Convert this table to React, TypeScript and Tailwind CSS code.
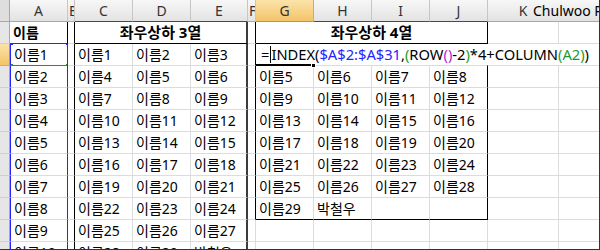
import React from "react";

const COLS = ["A", "B", "C", "D", "E", "F", "G", "H", "I", "J", "K", "L"];

const nm = (n: number) => (n === 30 ? "박철우" : n > 30 ? "" : `이름${n}`);

type Spec = {
  key: string;
  text?: string;
  bold?: boolean;
  center?: boolean;
  r: string;
  b: string;
  l?: string;
  span?: string;
  formula?: boolean;
  sel?: boolean;
};

const GR = "border-r-[#dadcdd]";
const GB = "border-b-[#dadcdd]";
const BR = "border-r-black";
const BB = "border-b-black";
const BLUE_R = "border-r-[#2424ff]";
const BLUE_B = "border-b-[#2424ff]";
const BLUE_L = "border-l border-l-[#2424ff]";
const GREEN_B = "border-b-[#1f9a1f]";
const E_R = "border-r-2 border-r-[#3c3c3c]";

function buildRow(row: number): Spec[] {
  const cells: Spec[] = [];
  if (row === 1) {
    cells.push({ key: "A", text: "이름", bold: true, r: BR, b: BLUE_B });
  } else {
    cells.push({
      key: "A",
      text: nm(row - 1),
      r: BLUE_R,
      b: row === 2 ? GREEN_B : GB,
      l: BLUE_L,
      sel: row === 2,
    });
  }
  cells.push({ key: "B", r: BR, b: GB });
  if (row === 1) {
    cells.push({ key: "CE", text: "좌우상하 3열", bold: true, center: true, r: E_R, b: BB, span: "col-span-3" });
  } else {
    const base = (row - 2) * 3;
    cells.push({ key: "C", text: nm(base + 1), r: GR, b: GB });
    cells.push({ key: "D", text: nm(base + 2), r: GR, b: GB });
    cells.push({ key: "E", text: nm(base + 3), r: E_R, b: GB });
  }
  cells.push({ key: "F", r: row <= 9 ? BR : GR, b: GB });
  if (row === 1) {
    cells.push({ key: "GJ", text: "좌우상하 4열", bold: true, center: true, r: BR, b: BB, span: "col-span-4" });
  } else if (row === 2) {
    cells.push({ key: "G", formula: true, r: GR, b: GB });
    cells.push({ key: "H", r: GR, b: GB });
    cells.push({ key: "I", r: GR, b: GB });
    cells.push({ key: "J", r: BR, b: GB });
  } else if (row <= 9) {
    const base = (row - 2) * 4;
    const bb = row === 9 ? BB : GB;
    cells.push({ key: "G", text: nm(base + 1), r: GR, b: bb });
    cells.push({ key: "H", text: nm(base + 2), r: GR, b: bb });
    cells.push({ key: "I", text: nm(base + 3), r: GR, b: bb });
    cells.push({ key: "J", text: nm(base + 4), r: BR, b: bb });
  } else {
    cells.push({ key: "G", r: GR, b: GB });
    cells.push({ key: "H", r: GR, b: GB });
    cells.push({ key: "I", r: GR, b: GB });
    cells.push({ key: "J", r: GR, b: GB });
  }
  cells.push({ key: "K", r: GR, b: GB });
  cells.push({ key: "L", r: GR, b: GB });
  return cells;
}

function Formula() {
  return (
    <div className="absolute left-0 top-0 z-10 flex h-[21px] w-[342px] items-center bg-white pl-[5px] text-[14.7px] leading-none text-black whitespace-nowrap font-['Noto_Sans',sans-serif]">
      <span>=</span>
      <span className="mx-[0.5px] inline-block h-[17px] w-px bg-black" />
      <span>INDEX(</span>
      <span className="text-[#2424ff]">$A$2:$A$31</span>
      <span>,</span>
      <span className="text-[#1f9a1f]">(</span>
      <span>ROW</span>
      <span className="text-[#b01ed0]">()</span>
      <span>-2</span>
      <span className="text-[#1f9a1f]">)</span>
      <span>*4+COLUMN</span>
      <span className="text-[#1f9a1f]">(A2)</span>
      <span>)</span>
    </div>
  );
}

export default function App() {
  const rows = Array.from({ length: 11 }, (_, i) => i + 1);
  return (
    <div className="relative h-[250px] w-[600px] overflow-hidden bg-white font-['Noto_Sans','Noto_Sans_CJK_KR',sans-serif]">
      <div className="grid grid-cols-[10px_58px_7px_58px_58px_57px_8px_58px_58px_58px_58px_71px_41px] auto-rows-[22px]">
        <div className="border-r border-b border-r-[#a8a8a8] border-b-[#a8a8a8] bg-[#dedede]" />
        {COLS.map((c) => {
          const active = c === "G";
          const narrow = c === "B" || c === "F";
          const dark = ["C", "D", "E", "G", "H", "I", "J"].includes(c);
          return (
            <div
              key={c}
              className={`flex items-center overflow-hidden border-r border-b text-[14px] text-[#333] ${
                narrow ? "justify-start pl-px" : "justify-center"
              } ${
                active
                  ? "bg-linear-to-b from-[#fbe3a8] to-[#f3c467] border-r-[#e0a94d] border-b-[#d8902f]"
                  : `bg-linear-to-b from-[#f7f7f7] to-[#e3e3e3] border-r-[#c6c6c6] ${dark ? "border-b-[#4a4a4a]" : "border-b-[#a8a8a8]"}`
              }`}
            >
              {c}
            </div>
          );
        })}
        {rows.map((row) => (
          <React.Fragment key={row}>
            <div
              className={`border-r border-b ${
                row === 2
                  ? "bg-linear-to-b from-[#fbe3a8] to-[#f3c467] border-r-[#d8902f] border-b-[#e0a94d]"
                  : "bg-[#e6e6e6] border-r-[#a8a8a8] border-b-[#cfcfcf]"
              }`}
            />
            {buildRow(row).map((c) => (
              <div
                key={c.key}
                className={`relative flex items-center whitespace-nowrap border-r border-b text-black ${c.r} ${c.b} ${c.l ?? ""} ${
                  c.span ?? ""
                } ${c.center ? "justify-center text-[15px]" : "pl-[3px] text-[14px]"} ${c.bold ? "font-bold" : ""} ${
                  c.formula ? "" : "overflow-hidden"
                }`}
              >
                {c.text}
                {c.sel && (
                  <>
                    <span className="absolute -left-[2px] -top-[3px] h-[4px] w-[4px] bg-[#2424ff]" />
                    <span className="absolute -right-[3px] -top-[3px] h-[4px] w-[4px] bg-[#2424ff]" />
                    <span className="absolute -bottom-[3px] -left-[2px] h-[4px] w-[4px] bg-[#1f9a1f]" />
                    <span className="absolute -bottom-[3px] -right-[3px] h-[4px] w-[4px] bg-[#1f9a1f]" />
                  </>
                )}
                {c.formula && (
                  <>
                    <Formula />
                    <span className="absolute -bottom-px left-0 z-10 h-[2px] w-[57px] bg-black" />
                    <span className="absolute -bottom-[3px] -right-[3px] z-20 h-[5px] w-[5px] border border-white bg-black" />
                  </>
                )}
              </div>
            ))}
          </React.Fragment>
        ))}
      </div>
      <div className="absolute left-[532px] top-0 flex h-[21px] items-center whitespace-nowrap bg-linear-to-b from-[#f7f7f7] to-[#e3e3e3] pl-px text-[14px] text-black">
        Chulwoo Park
      </div>
      <div className="pointer-events-none absolute inset-0 z-30 border-r border-b border-[#333]" />
    </div>
  );
}
